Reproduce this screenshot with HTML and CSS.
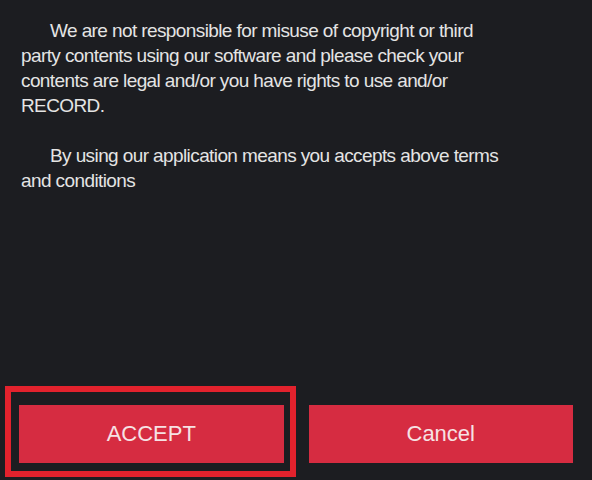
FILE: index.html
```html
<!DOCTYPE html>
<html>
<head>
<meta charset="utf-8">
<link rel="stylesheet" href="styles.css">
</head>
<body>
<div class="screen">
  <div class="terms">
    <p class="para">We are not responsible for misuse of copyright or third party contents using our software and please check your contents are legal and/or you have rights to use and/or RECORD.</p>
    <p class="para">By using our application means you accepts above terms and conditions</p>
  </div>
  <div class="actions">
    <div class="btn-wrap">
      <button class="btn">ACCEPT</button>
      <div class="highlight"></div>
    </div>
    <div class="btn-wrap">
      <button class="btn">Cancel</button>
    </div>
  </div>
</div>
</body>
</html>
```

FILE: styles.css
```css
html, body {
  margin: 0;
  padding: 0;
  background: #1c1d21;
}
.screen {
  width: 592px;
  height: 480px;
  display: flex;
  flex-direction: column;
  justify-content: space-between;
  box-sizing: border-box;
  font-family: "Liberation Sans", Arial, sans-serif;
}
.terms {
  padding: 18px 86px 0 21px;
  color: #e4e4e4;
  font-size: 19px;
  line-height: 25px;
  letter-spacing: -0.6px;
}
.para {
  margin: 0 0 25px 0;
  text-indent: 29px;
}
.actions {
  display: flex;
  gap: 25px;
  padding: 0 19px 17px 19px;
}
.btn-wrap {
  position: relative;
  flex: 1;
  display: flex;
}
.btn {
  flex: 1;
  height: 58px;
  border: none;
  background: #d62c41;
  color: #f6e2e4;
  font-family: "Liberation Sans", Arial, sans-serif;
  font-size: 22px;
  padding: 0;
}
.highlight {
  position: absolute;
  left: -14px;
  top: -19px;
  right: -12px;
  bottom: -14px;
  border: 6px solid #e2222d;
  pointer-events: none;
}
```
